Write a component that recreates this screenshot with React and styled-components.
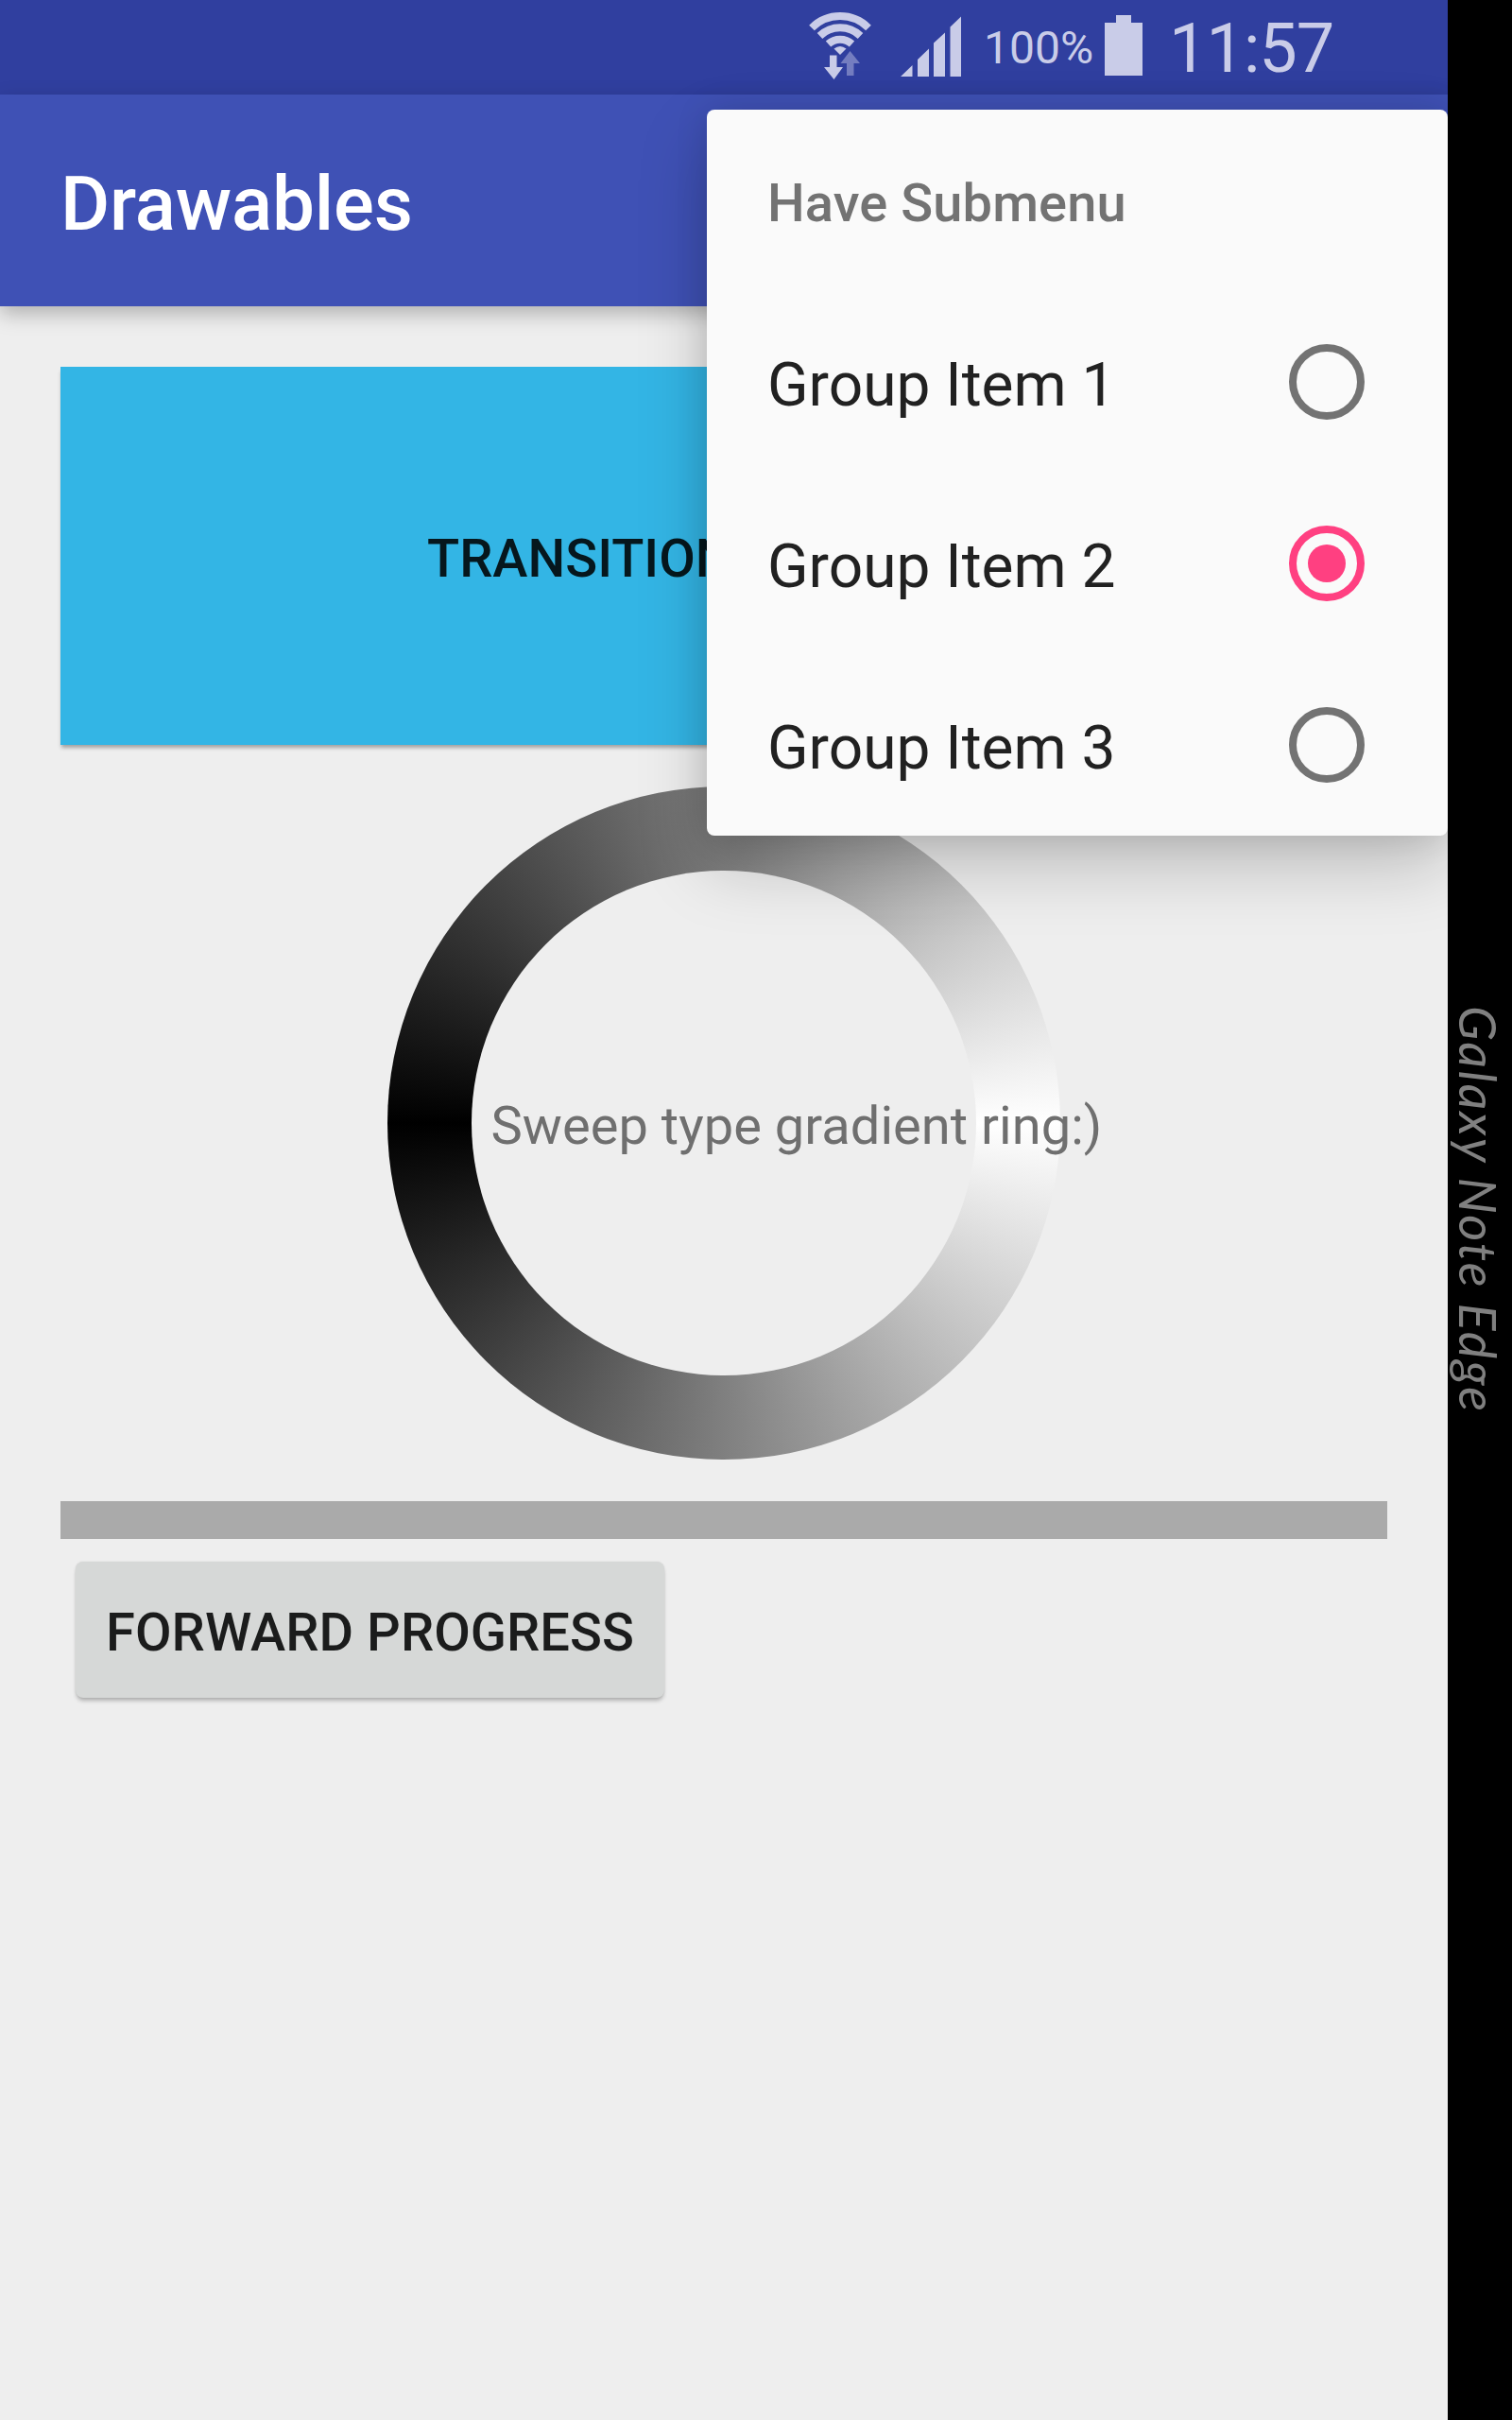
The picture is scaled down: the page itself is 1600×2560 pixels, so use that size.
import React, { useState } from "react";
import styled, { createGlobalStyle } from "styled-components";

const GlobalStyle = createGlobalStyle`
  * { box-sizing: border-box; }
  body { margin: 0; background: #000; font-family: Roboto, "Liberation Sans", sans-serif; }
`;

const Device = styled.div`
  display: flex;
  width: 1600px;
  height: 2560px;
  overflow: hidden;
  background: #000;
`;

const Screen = styled.main`
  position: relative;
  display: flex;
  flex-direction: column;
  width: 1532px;
  height: 100%;
  overflow: hidden;
  background: #eee;
`;

const EdgeStrip = styled.aside`
  flex: 1;
  display: flex;
  align-items: center;
  justify-content: center;
  padding-right: 4px;
`;

const EdgeLabel = styled.span`
  writing-mode: vertical-rl;
  font-family: Lato, "Open Sans", sans-serif;
  font-style: italic;
  font-size: 54px;
  font-weight: 400;
  line-height: 64px;
  letter-spacing: 2.2px;
  white-space: nowrap;
  color: #808080;
`;

const StatusBar = styled.header`
  display: flex;
  flex: none;
  height: 100px;
  padding-left: 854px;
  background: #303f9f;
  color: #c9cce8;
`;

const StatusIcon = styled.svg`
  flex: none;
  width: ${(p) => p.$width}px;
  height: 100px;
  margin-right: ${(p) => p.$gap}px;
  fill: currentColor;
`;

const StatusText = styled.span`
  font-size: ${(p) => p.$size}px;
  line-height: 100px;
  width: ${(p) => p.$width}px;
  padding-top: ${(p) => p.$drop}px;
  letter-spacing: ${(p) => p.$tracking || 0}px;
  white-space: nowrap;
`;

const AppBar = styled.div`
  position: relative;
  z-index: 1;
  display: flex;
  flex: none;
  align-items: center;
  height: 224px;
  padding: 8px 64px 0;
  background: #3f51b5;
  box-shadow: 0 8px 20px rgba(0, 0, 0, 0.26);
`;

const Title = styled.h1`
  margin: 0;
  font-size: 80px;
  font-weight: 500;
  line-height: 94px;
  letter-spacing: -0.15px;
  color: #fff;
`;

const Content = styled.section`
  display: flex;
  flex-direction: column;
  align-items: flex-start;
  padding: 64px;
`;

const TransitionButton = styled.button`
  width: 1404px;
  height: 400px;
  padding: 6px 0 0 388px;
  border: 0;
  background: #33b5e5;
  box-shadow: 0 4px 4px -1px rgba(0, 0, 0, 0.32);
  font: 500 56px Roboto, sans-serif;
  text-align: left;
  color: #06171d;
`;

const RingView = styled.div`
  display: flex;
  align-items: center;
  justify-content: center;
  width: 1404px;
  height: 800px;
`;

const Ring = styled.div`
  width: 712px;
  height: 712px;
  padding: 89px;
  border-radius: 50%;
  background: conic-gradient(from 90deg, #fff, #000, #fff);
`;

const RingHole = styled.div`
  display: flex;
  align-items: center;
  height: 100%;
  padding: 6px 0 0 20.5px;
  border-radius: 50%;
  background: #eee;
  font-size: 56px;
  letter-spacing: 0.04px;
  white-space: nowrap;
  color: #6f6f6f;
`;

const ProgressTrack = styled.div`
  width: 100%;
  height: 40px;
  background: #aaa;
`;

const ForwardButton = styled.button`
  width: 623px;
  height: 144px;
  margin: 24px 16px;
  padding: 6px 0 0;
  border: 0;
  border-radius: 8px;
  background: #d6d8d7;
  box-shadow: 0 4px 4px -1px rgba(0, 0, 0, 0.26), 0 0 2px rgba(0, 0, 0, 0.1);
  font: 500 56px Roboto, sans-serif;
  letter-spacing: 0.05px;
  white-space: nowrap;
  color: #1b1c1c;
`;

const Menu = styled.div`
  position: absolute;
  z-index: 2;
  top: 116px;
  right: 0;
  width: 784px;
  border-radius: 8px;
  background: #fafafa;
  box-shadow: 0 32px 72px rgba(0, 0, 0, 0.21), 0 0 36px rgba(0, 0, 0, 0.11);
`;

const MenuHeader = styled.div`
  display: flex;
  align-items: center;
  height: 192px;
  padding: 6px 64px 0;
  font-size: 56px;
  font-weight: 500;
  letter-spacing: 0.1px;
  color: #737373;
`;

const MenuItem = styled.div`
  display: flex;
  align-items: center;
  justify-content: space-between;
  height: 192px;
  padding: 0 88px 0 64px;
  cursor: pointer;
`;

const ItemLabel = styled.span`
  padding-top: 6px;
  font-size: 64px;
  color: #212121;
`;

const Radio = styled.span`
  display: grid;
  place-items: center;
  width: 80px;
  height: 80px;
  border: 8px solid ${(p) => (p.$checked ? "#ff4081" : "#737373")};
  border-radius: 50%;

  &::after {
    content: "";
    width: 40px;
    height: 40px;
    border-radius: 50%;
    background: ${(p) => (p.$checked ? "#ff4081" : "transparent")};
  }
`;

const WifiIcon = () => (
  <StatusIcon viewBox="0 0 70 100" $width={70} $gap={29}>
    <g fill="none" stroke="currentColor" strokeWidth="8">
      <path d="M5 29.500A42.500 42.500 0 0 1 65 29.500" />
      <path d="M13.500 38A31 31 0 0 1 56.500 38" />
      <path d="M22.500 46.500A18.500 18.500 0 0 1 47.500 46.500" />
    </g>
    <path d="M28.500 51.500Q35 46.500 41.500 51.500L35 58z" />
    <path d="M24 58.500h7.500V71h6.500L28.500 84 18 71h6z" />
    <path d="M45.500 54L56 67h-6.500v13h-7.500V67H35.500z" fill="#747dc0" />
  </StatusIcon>
);

const SignalIcon = () => (
  <StatusIcon viewBox="0 0 66 100" $width={66} $gap={22}>
    <path d="M0 81L12.500 69V81zM18 81V63L30 51.500V81zM35 81V45.500L47 34.500V81zM52.500 81V28.500L64 17.500V81z" />
  </StatusIcon>
);

const BatteryIcon = () => (
  <StatusIcon viewBox="0 0 40 100" $width={40} $gap={28}>
    <path d="M12 16h16v8h12v56H0V24h12z" />
  </StatusIcon>
);

const items = ["Group Item 1", "Group Item 2", "Group Item 3"];

export default function App() {
  const [selected, setSelected] = useState(1);
  return (
    <Device>
      <GlobalStyle />
      <Screen>
        <StatusBar>
          <WifiIcon />
          <SignalIcon />
          <StatusText $size={48} $width={128} $drop={1}>100%</StatusText>
          <BatteryIcon />
          <StatusText $size={72} $width={180} $drop={2} $tracking={-1}>11:57</StatusText>
        </StatusBar>
        <AppBar>
          <Title>Drawables</Title>
        </AppBar>
        <Content>
          <TransitionButton>TRANSITION</TransitionButton>
          <RingView>
            <Ring>
              <RingHole>Sweep type gradient ring:)</RingHole>
            </Ring>
          </RingView>
          <ProgressTrack />
          <ForwardButton>FORWARD PROGRESS</ForwardButton>
        </Content>
        <Menu>
          <MenuHeader>Have Submenu</MenuHeader>
          {items.map((label, i) => (
            <MenuItem key={label} onClick={() => setSelected(i)}>
              <ItemLabel>{label}</ItemLabel>
              <Radio $checked={i === selected} />
            </MenuItem>
          ))}
        </Menu>
      </Screen>
      <EdgeStrip>
        <EdgeLabel>Galaxy Note Edge</EdgeLabel>
      </EdgeStrip>
    </Device>
  );
}
